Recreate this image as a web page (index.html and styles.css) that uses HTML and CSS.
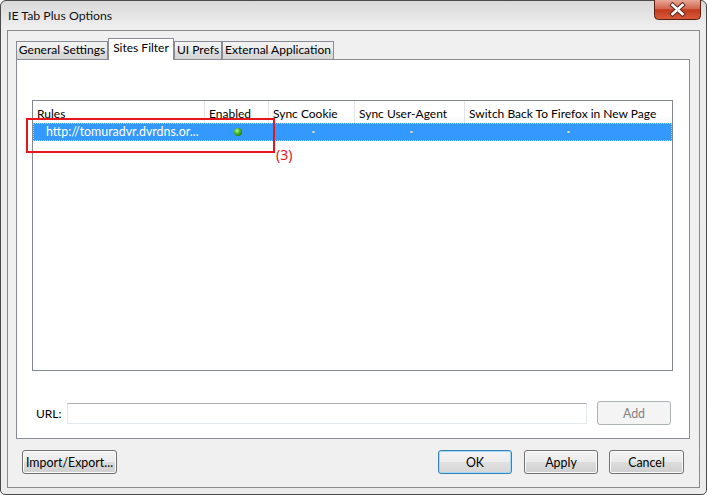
FILE: index.html
```html
<!DOCTYPE html>
<html lang="en">
<head>
    <meta charset="UTF-8">
    <meta name="viewport" content="width=device-width, initial-scale=1.0">
    <link rel="stylesheet" href="styles.css">
</head>
<body>
    <div class="window">
        <div class="titlebar">
            <span class="title">IE Tab Plus Options</span>
            <div class="close">
                <svg width="47" height="20" viewBox="0 0 47 20" xmlns="http://www.w3.org/2000/svg">
                    <defs>
                        <linearGradient id="closeGrad" x1="0" y1="0" x2="0" y2="1">
                            <stop offset="0" stop-color="#e8a898"/>
                            <stop offset="0.45" stop-color="#d2654b"/>
                            <stop offset="0.5" stop-color="#c23a1d"/>
                            <stop offset="1" stop-color="#d95c3b"/>
                        </linearGradient>
                    </defs>
                    <path d="M0.5 0 V15.5 Q0.5 19.5 4.5 19.5 H42.5 Q46.5 19.5 46.5 15.5 V0" fill="url(#closeGrad)" stroke="#5a1e12"/>
                    <!-- the X glyph -->
                    <path d="M18.5 5 L28.5 14 M28.5 5 L18.5 14" stroke="#5b2d24" stroke-width="4.6" stroke-linecap="square"/>
                    <path d="M18.5 5 L28.5 14 M28.5 5 L18.5 14" stroke="#ffffff" stroke-width="2.6" stroke-linecap="square"/>
                </svg>
            </div>
        </div>
        <div class="client">
            <div class="tabs">
                <div class="tab tab-general">General Settings</div>
                <div class="tab tab-sites selected">Sites Filter</div>
                <div class="tab tab-ui">UI Prefs</div>
                <div class="tab tab-ext">External Application</div>
            </div>
            <div class="panel">
                <div class="list">
                    <div class="list-head">
                        <div class="head-cell">Rules</div>
                        <div class="head-cell">Enabled</div>
                        <div class="head-cell">Sync Cookie</div>
                        <div class="head-cell">Sync User-Agent</div>
                        <div class="head-cell last">Switch Back To Firefox in New Page</div>
                    </div>
                    <div class="row selected">
                        <div class="cell rule">http://tomuradvr.dvrdns.or...</div>
                        <div class="cell check"><span class="dot on"></span></div>
                        <div class="cell check"><span class="dot"></span></div>
                        <div class="cell check"><span class="dot"></span></div>
                        <div class="cell check"><span class="dot"></span></div>
                    </div>
                </div>
                <div class="url-row">
                    <span class="url-label">URL:</span>
                    <div class="url-input"></div>
                    <button class="btn btn-add" disabled>Add</button>
                </div>
            </div>
            <div class="buttons">
                <button class="btn btn-import">Import/Export...</button>
                <button class="btn btn-ok default">OK</button>
                <button class="btn btn-apply">Apply</button>
                <button class="btn btn-cancel">Cancel</button>
            </div>
        </div>
        <!-- annotation drawn over the dialog -->
        <div class="callout"></div>
        <div class="callout-label">(3)</div>
    </div>
</body>
</html>
```

FILE: styles.css
```css
html, body {
    margin: 0;
    padding: 0;
    background: #ffffff;
}
body {
    font-family: Lato, "Noto Sans", sans-serif;
    font-size: 12px;
    color: #000;
}
.window {
    position: relative;
    width: 707px;
    height: 495px;
    box-sizing: border-box;
    border: 1px solid #4b4b4b;
    border-radius: 6px 6px 5px 5px;
    padding: 0 6px 6px 6px;
    display: flex;
    flex-direction: column;
    background: linear-gradient(to bottom, #d9d9d9 0px, #eeeeee 26px, #ececec 100%);
}
.titlebar {
    height: 29px;
    display: flex;
    align-items: flex-start;
    flex-shrink: 0;
}
.title {
    margin-left: 1px;
    padding-top: 7px;
    line-height: 16px;
    font-size: 12.3px;
    color: #111;
}
.close {
    margin-left: auto;
    margin-right: -1px;
    margin-top: -1px;
    height: 20px;
}
.close svg {
    display: block;
}
.client {
    flex: 1;
    border: 1px solid #8a8a8a;
    background: #f0f0f0;
    padding: 7px 9px 0 8px;
    display: flex;
    flex-direction: column;
}
.tabs {
    display: flex;
    align-items: flex-end;
    height: 21px;
}
.tab {
    box-sizing: border-box;
    height: 18px;
    border: 1px solid #898c95;
    border-bottom: none;
    background: linear-gradient(to bottom, #f3f3f3, #ebebeb 50%, #dddddd 51%, #d6d6d6);
    text-align: center;
    line-height: 16px;
    white-space: nowrap;
}
.tab-general { width: 92px; }
.tab-sites { width: 66px; }
.tab-ui { width: 48px; }
.tab-ext { width: 112px; }
.tab.selected {
    position: relative;
    z-index: 1;
    height: 22px;
    margin-bottom: -1px;
    background: #ffffff;
    line-height: 18px;
}
.panel {
    box-sizing: border-box;
    height: 380px;
    border: 1px solid #898c95;
    background: #ffffff;
    padding: 40px 16px 0 15px;
}
.list {
    box-sizing: border-box;
    height: 271px;
    border: 1px solid #828790;
    background: #ffffff;
}
.list-head,
.row {
    display: grid;
    grid-template-columns: 172px 64px 86px 110px 1fr;
}
.list-head {
    height: 22px;
    background: linear-gradient(to bottom, #ffffff, #ffffff 60%, #f6f7f8);
}
.head-cell {
    padding-left: 4px;
    line-height: 25px;
    border-right: 1px solid #e3e4e6;
    white-space: nowrap;
    overflow: hidden;
}
.head-cell.last {
    border-right: none;
}
.row {
    box-sizing: border-box;
    height: 18px;
}
.row.selected {
    background: #3399ff;
    border: 1px dotted #a6d2ff;
    color: #ffffff;
}
.cell {
    line-height: 16px;
    white-space: nowrap;
}
.cell.rule {
    padding-left: 12px;
    font-size: 12.4px;
}
.cell.check {
    display: flex;
    align-items: center;
    justify-content: center;
}
.dot {
    width: 3px;
    height: 2px;
    border-radius: 1px;
    background: #d8d2c6;
}
.dot.on {
    width: 8px;
    height: 8px;
    border-radius: 50%;
    background: radial-gradient(circle at 38% 35%, #b6f58c 0, #3fae1c 45%, #0d5e06 100%);
}
.url-row {
    display: flex;
    align-items: center;
    height: 24px;
    margin: 30px 2px 0 4px;
}
.url-label {
    width: 31px;
}
.url-input {
    flex: 1;
    box-sizing: border-box;
    height: 21px;
    border: 1px solid #e3e9ef;
    border-top-color: #abadb3;
    background: #ffffff;
    margin-right: 10px;
}
.btn {
    box-sizing: border-box;
    height: 24px;
    margin: 0;
    padding: 0;
    border: 1px solid #707070;
    border-radius: 3px;
    background: linear-gradient(to bottom, #f2f2f2 0%, #ebebeb 49%, #dddddd 50%, #cfcfcf 100%);
    box-shadow: inset 0 0 0 1px #fbfbfb;
    font-family: Lato, "Noto Sans", sans-serif;
    font-size: 12.4px;
    color: #000;
}
.btn-add {
    width: 74px;
}
.btn:disabled {
    border-color: #adb2b5;
    background: #f4f4f4;
    box-shadow: none;
    color: #838383;
}
.buttons {
    display: flex;
    margin: 11px 6px 0 6px;
}
.btn-import {
    width: 95px;
    margin-right: auto;
}
.btn-ok {
    width: 74px;
}
.btn-apply {
    width: 74px;
    margin-left: 12px;
}
.btn-cancel {
    width: 75px;
    margin-left: 11px;
}
.btn.default {
    border-color: #3c7fb1;
    box-shadow: inset 0 0 0 1px #9fdcf7;
    background: linear-gradient(to bottom, #f4f4f4 0%, #ececec 49%, #e0e0e0 50%, #d6d6d6 100%);
}
.callout {
    position: absolute;
    left: 25px;
    top: 117px;
    width: 249px;
    height: 35px;
    box-sizing: border-box;
    border: 2px solid #e5161c;
}
.callout-label {
    position: absolute;
    left: 275px;
    top: 145px;
    font-family: "Noto Sans", Lato, sans-serif;
    font-size: 14px;
    line-height: 18px;
    color: #e5161c;
}
```
